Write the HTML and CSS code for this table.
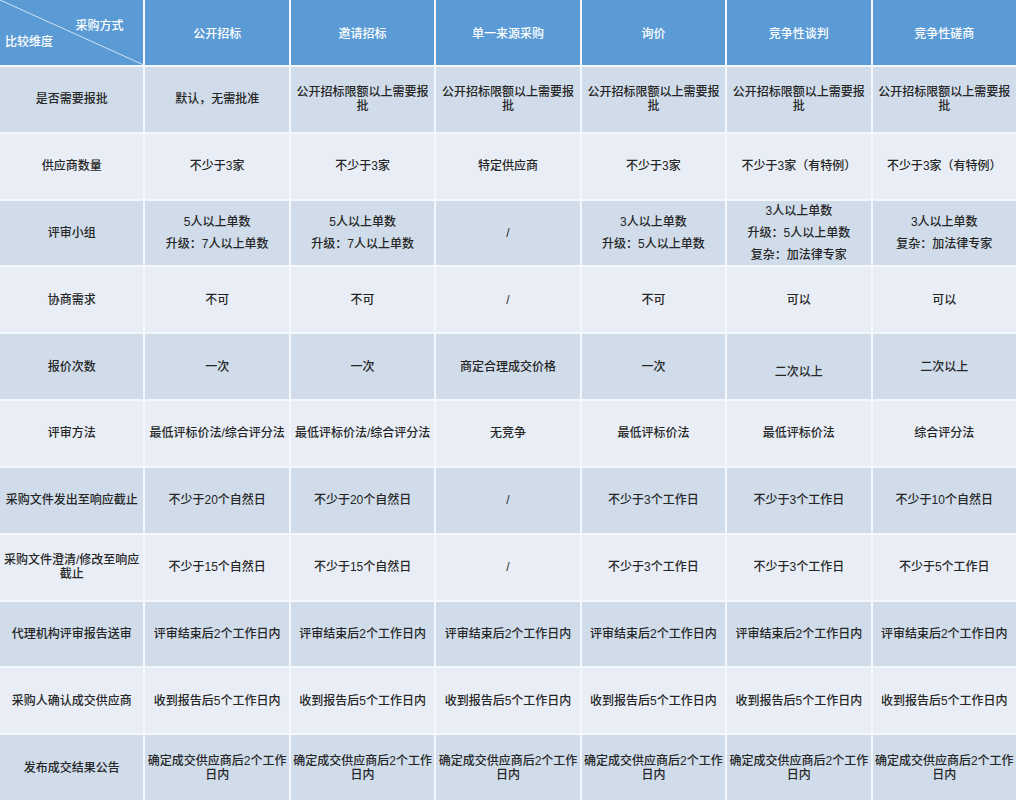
FILE: index.html
```html
<!DOCTYPE html>
<html lang="zh">
<head>
<meta charset="utf-8">
<link rel="stylesheet" href="styles.css">
</head>
<body>
<div class="table">
  <div class="cell head corner">
    <svg class="diag" viewBox="0 0 100 100" preserveAspectRatio="none"><line x1="0" y1="0" x2="100" y2="100" stroke="#cfe2f5" stroke-width="1" vector-effect="non-scaling-stroke"/></svg>
    <span class="c-top">采购方式</span>
    <span class="c-bot">比较维度</span>
  </div>
  <div class="cell head">公开招标</div>
  <div class="cell head">邀请招标</div>
  <div class="cell head">单一来源采购</div>
  <div class="cell head">询价</div>
  <div class="cell head">竞争性谈判</div>
  <div class="cell head">竞争性磋商</div>

  <div class="cell dark">是否需要报批</div>
  <div class="cell dark">默认，无需批准</div>
  <div class="cell dark">公开招标限额以上需要报批</div>
  <div class="cell dark">公开招标限额以上需要报批</div>
  <div class="cell dark">公开招标限额以上需要报批</div>
  <div class="cell dark">公开招标限额以上需要报批</div>
  <div class="cell dark">公开招标限额以上需要报批</div>

  <div class="cell light">供应商数量</div>
  <div class="cell light">不少于3家</div>
  <div class="cell light">不少于3家</div>
  <div class="cell light">特定供应商</div>
  <div class="cell light">不少于3家</div>
  <div class="cell light">不少于3家（有特例）</div>
  <div class="cell light">不少于3家（有特例）</div>

  <div class="cell dark">评审小组</div>
  <div class="cell dark"><div class="lines"><span>5人以上单数</span><span>升级：7人以上单数</span></div></div>
  <div class="cell dark"><div class="lines"><span>5人以上单数</span><span>升级：7人以上单数</span></div></div>
  <div class="cell dark">/</div>
  <div class="cell dark"><div class="lines"><span>3人以上单数</span><span>升级：5人以上单数</span></div></div>
  <div class="cell dark"><div class="lines"><span>3人以上单数</span><span>升级：5人以上单数</span><span>复杂：加法律专家</span></div></div>
  <div class="cell dark"><div class="lines"><span>3人以上单数</span><span>复杂：加法律专家</span></div></div>

  <div class="cell light">协商需求</div>
  <div class="cell light">不可</div>
  <div class="cell light">不可</div>
  <div class="cell light">/</div>
  <div class="cell light">不可</div>
  <div class="cell light">可以</div>
  <div class="cell light">可以</div>

  <div class="cell dark">报价次数</div>
  <div class="cell dark">一次</div>
  <div class="cell dark">一次</div>
  <div class="cell dark">商定合理成交价格</div>
  <div class="cell dark">一次</div>
  <div class="cell dark low">二次以上</div>
  <div class="cell dark">二次以上</div>

  <div class="cell light">评审方法</div>
  <div class="cell light">最低评标价法/综合评分法</div>
  <div class="cell light">最低评标价法/综合评分法</div>
  <div class="cell light">无竞争</div>
  <div class="cell light">最低评标价法</div>
  <div class="cell light">最低评标价法</div>
  <div class="cell light">综合评分法</div>

  <div class="cell dark">采购文件发出至响应截止</div>
  <div class="cell dark">不少于20个自然日</div>
  <div class="cell dark">不少于20个自然日</div>
  <div class="cell dark">/</div>
  <div class="cell dark">不少于3个工作日</div>
  <div class="cell dark">不少于3个工作日</div>
  <div class="cell dark">不少于10个自然日</div>

  <div class="cell light">采购文件澄清/修改至响应截止</div>
  <div class="cell light">不少于15个自然日</div>
  <div class="cell light">不少于15个自然日</div>
  <div class="cell light">/</div>
  <div class="cell light">不少于3个工作日</div>
  <div class="cell light">不少于3个工作日</div>
  <div class="cell light">不少于5个工作日</div>

  <div class="cell dark">代理机构评审报告送审</div>
  <div class="cell dark">评审结束后2个工作日内</div>
  <div class="cell dark">评审结束后2个工作日内</div>
  <div class="cell dark">评审结束后2个工作日内</div>
  <div class="cell dark">评审结束后2个工作日内</div>
  <div class="cell dark">评审结束后2个工作日内</div>
  <div class="cell dark">评审结束后2个工作日内</div>

  <div class="cell light">采购人确认成交供应商</div>
  <div class="cell light">收到报告后5个工作日内</div>
  <div class="cell light">收到报告后5个工作日内</div>
  <div class="cell light">收到报告后5个工作日内</div>
  <div class="cell light">收到报告后5个工作日内</div>
  <div class="cell light">收到报告后5个工作日内</div>
  <div class="cell light">收到报告后5个工作日内</div>

  <div class="cell dark">发布成交结果公告</div>
  <div class="cell dark">确定成交供应商后2个工作日内</div>
  <div class="cell dark">确定成交供应商后2个工作日内</div>
  <div class="cell dark">确定成交供应商后2个工作日内</div>
  <div class="cell dark">确定成交供应商后2个工作日内</div>
  <div class="cell dark">确定成交供应商后2个工作日内</div>
  <div class="cell dark">确定成交供应商后2个工作日内</div>
</div>
</body>
</html>
```
FILE: styles.css
```css
html, body {
  margin: 0;
  padding: 0;
  background: #ffffff;
}
.table {
  width: 1016px;
  height: 800px;
  display: grid;
  grid-template-columns: repeat(7, 1fr);
  grid-template-rows: repeat(12, 1fr);
  gap: 2px;
  background: #f4f7fb;
  font-family: "Liberation Sans", "Noto Sans CJK SC", sans-serif;
  font-size: 12px;
  line-height: 14px;
  color: #262626;
  font-weight: 500;
}
.cell {
  display: flex;
  align-items: center;
  justify-content: center;
  text-align: center;
  padding: 0 1px;
  min-width: 0;
}
.head {
  background: #5b9bd5;
  color: #ffffff;
  padding-top: 3px;
}
.dark {
  background: #d0dcea;
}
.light {
  background: #e9eef6;
}
.low {
  padding-top: 10px;
}
.lines {
  display: flex;
  flex-direction: column;
  gap: 8px;
}
.corner {
  position: relative;
  padding: 0;
}
.diag {
  position: absolute;
  left: 0;
  top: 0;
  width: 100%;
  height: 100%;
}
.c-top {
  position: absolute;
  top: 19px;
  right: 20px;
}
.c-bot {
  position: absolute;
  left: 5px;
  top: 35px;
}
```
